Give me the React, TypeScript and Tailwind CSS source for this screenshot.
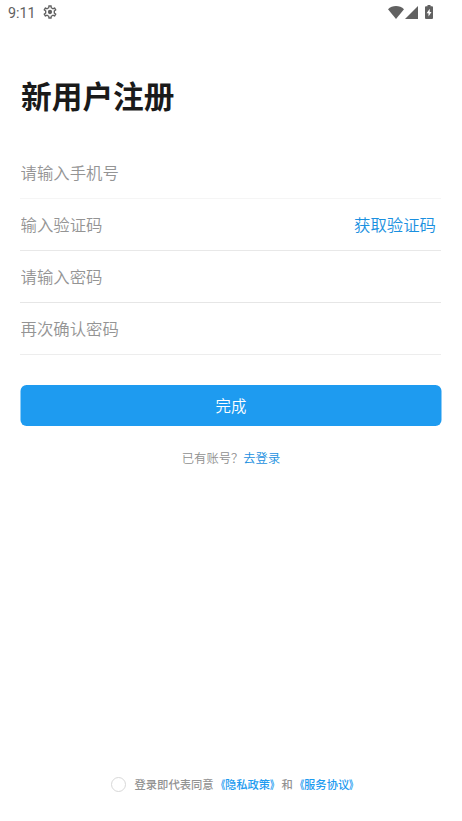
import { useState } from "react";

const FIELDS = [
  { name: "phone", type: "tel", placeholder: "请输入手机号", line: "border-[#f5f5f5]" },
  { name: "code", type: "text", placeholder: "输入验证码", line: "border-[#e8e8e8]" },
  { name: "password", type: "password", placeholder: "请输入密码", line: "border-[#e6e6e6]" },
  { name: "confirm", type: "password", placeholder: "再次确认密码", line: "border-[#ededed]" },
];

function StatusBar() {
  return (
    <div className="flex h-[26px] items-center pl-[8px] pr-[28px] text-[#616161]">
      <span className="font-['Roboto',sans-serif] text-[14.300px] leading-[26px]">9:11</span>
      <svg className="ml-[6px] size-[16px] -translate-y-px" viewBox="0 0 24 24" fill="currentColor">
        <path d="M19.43 12.98c.04-.32.07-.64.07-.98s-.03-.66-.07-.98l2.11-1.65c.19-.15.24-.42.12-.64l-2-3.46c-.12-.22-.39-.3-.61-.22l-2.49 1c-.52-.4-1.08-.73-1.69-.98l-.38-2.65C14.46 2.18 14.25 2 14 2h-4c-.25 0-.46.18-.49.42l-.38 2.65c-.61.25-1.17.59-1.69.98l-2.49-1c-.23-.09-.49 0-.61.22l-2 3.46c-.13.22-.07.49.12.64l2.11 1.65c-.04.32-.07.65-.07.98s.03.66.07.98l-2.11 1.65c-.19.15-.24.42-.12.64l2 3.46c.12.22.39.3.61.22l2.49-1c.52.4 1.08.73 1.69.98l.38 2.65c.03.24.24.42.49.42h4c.25 0 .46-.18.49-.42l.38-2.65c.61-.25 1.17-.59 1.69-.98l2.49 1c.23.09.49 0 .61-.22l2-3.46c.12-.22.07-.49-.12-.64l-2.11-1.65zm-1.98-1.71c.04.31.05.52.05.73s-.02.43-.05.73l-.14 1.13.89.7 1.08.84-.7 1.21-1.27-.51-1.04-.42-.9.68c-.43.32-.84.56-1.25.73l-1.06.43-.16 1.13-.2 1.35h-1.4l-.19-1.35-.16-1.13-1.06-.43c-.43-.18-.83-.41-1.23-.71l-.91-.7-1.06.43-1.27.51-.7-1.21 1.08-.84.89-.7-.14-1.13c-.03-.31-.05-.54-.05-.74s.02-.43.05-.73l.14-1.13-.89-.7-1.08-.84.7-1.21 1.27.51 1.04.42.9-.68c.43-.32.84-.56 1.25-.73l1.06-.43.16-1.13.2-1.35h1.39l.19 1.35.16 1.13 1.06.43c.43.18.83.41 1.23.71l.91.7 1.06-.43 1.27-.51.7 1.21-1.07.85-.89.7.14 1.13z" />
        <circle cx="12" cy="12" r="3.2" />
      </svg>
      <svg className="ml-auto h-[13px] w-[16px] -translate-y-px" viewBox="0 0 16 13" fill="currentColor">
        <path d="M8 13 0 3.2C2.2 1.2 5 0 8 0s5.800 1.200 8 3.200z" />
      </svg>
      <svg className="ml-[1px] size-[13px] -translate-y-px" viewBox="0 0 13 13" fill="currentColor">
        <path d="M13 0v13H0z" />
      </svg>
      <svg className="ml-[7px] mr-px h-[14px] w-[8px] -translate-y-px" viewBox="0 0 8 14" fill="currentColor">
        <path d="M2.500 0h3v1.300H7a1 1 0 0 1 1 1V13a1 1 0 0 1-1 1H1a1 1 0 0 1-1-1V2.300a1 1 0 0 1 1-1h1.500z" />
        <path d="M4.700 3.800 1.600 8.300h1.900v3.200l3-4.500H4.700z" fill="#fff" />
      </svg>
    </div>
  );
}

function DocLink({ title }: { title: string }) {
  return (
    <a className="flex text-[#1e9bf0]">
      <span className="origin-right scale-x-[0.75] font-bold">《</span>
      <span>{title}</span>
      <span className="origin-left scale-x-[0.75] font-bold">》</span>
    </a>
  );
}

export default function App() {
  const [agreed, setAgreed] = useState(false);

  return (
    <div className="flex h-[821px] w-full flex-col bg-white font-['Noto_Sans_CJK_SC',sans-serif]">
      <StatusBar />

      <main className="flex flex-1 flex-col pl-[20px] pr-[21px]">
        <h1 className="mt-[47px] pl-px text-[30.700px] font-bold leading-[44px] text-[#1a1a1a]">新用户注册</h1>

        <form className="mt-[30px]" onSubmit={(e) => e.preventDefault()}>
          {FIELDS.map((f) => (
            <div key={f.name} className={`flex h-[52px] items-center border-b ${f.line}`}>
              <input
                type={f.type}
                placeholder={f.placeholder}
                className="h-full min-w-0 flex-1 pb-[2px] pl-[0.500px] text-[16.400px] font-[350] text-[#333] outline-none placeholder:text-[#949494]"
              />
              {f.name === "code" && (
                <button type="button" className="mr-[5px] text-[16.400px] font-[350] text-[#1a90e0]">
                  获取验证码
                </button>
              )}
            </div>
          ))}

          <button
            type="submit"
            className="mt-[30px] block h-[41px] w-full translate-x-[0.500px] rounded-[6px] bg-[#1e9bf0] pt-px text-[15.400px] font-[350] text-white"
          >
            完成
          </button>
        </form>

        <p className="mt-[22px] flex justify-center pl-px text-[12.300px] font-[350] leading-[20px] text-[#8f8f8f]">
          <span>已有账号？</span>
          <a className="text-[#1a90e0]">去登录</a>
        </p>

        <div className="mb-[27px] mt-auto flex items-center pl-[90.500px] text-[11.300px] font-medium leading-[20px] text-[#929292]">
          <button
            type="button"
            aria-pressed={agreed}
            onClick={() => setAgreed(!agreed)}
            className={`mr-[9px] size-[15px] rounded-full border border-[#d8d8d8] ${agreed ? "bg-[#1e9bf0]" : "bg-white"}`}
          />
          <span>登录即代表同意</span>
          <DocLink title="隐私政策" />
          <span>和</span>
          <DocLink title="服务协议" />
        </div>
      </main>
    </div>
  );
}
